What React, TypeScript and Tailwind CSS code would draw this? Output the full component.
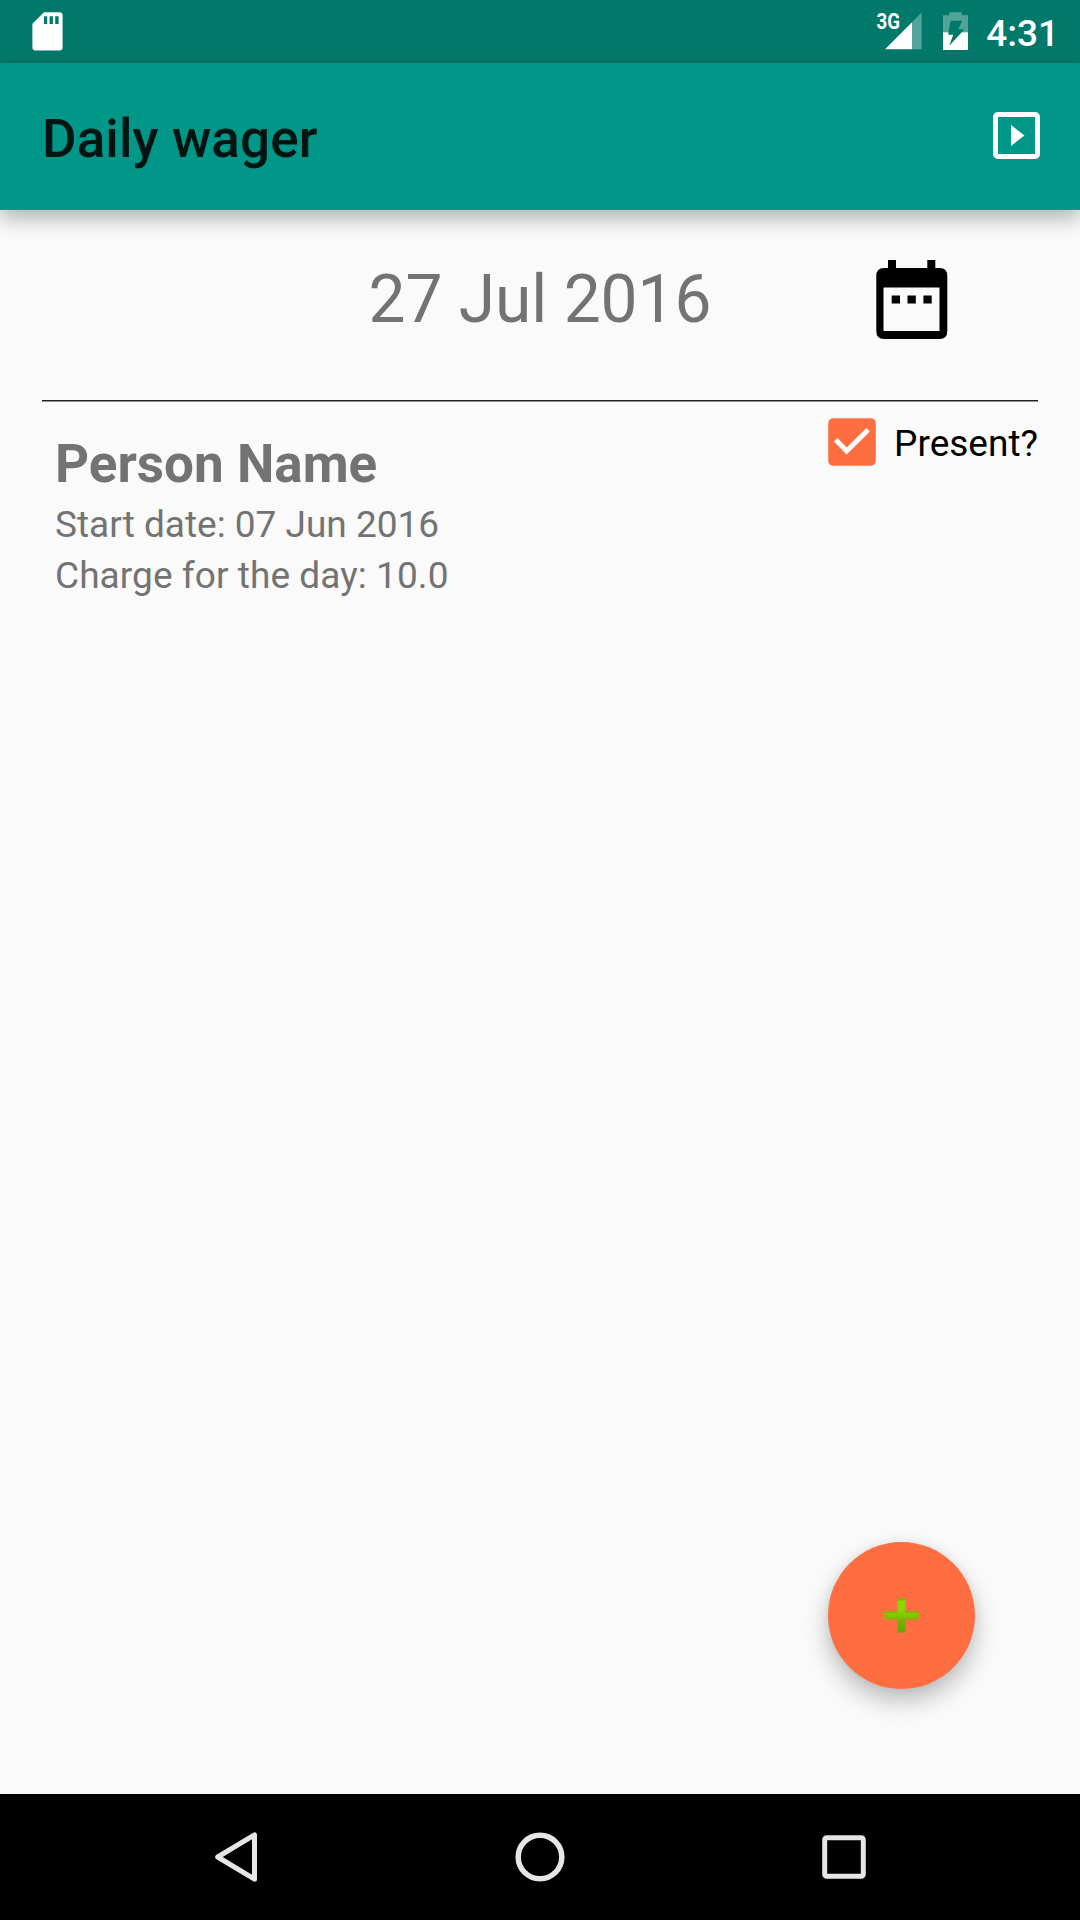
import React, { useState } from "react";

const people = [
  { name: "Person Name", startDate: "07 Jun 2016", charge: "10.0" },
];

const StatusBar = () => (
  <div className="flex h-[63px] items-center justify-between bg-[#00796B] pl-8 pr-[21px] text-white">
    <svg width="31" height="39" viewBox="0 0 31 39" fill="currentColor">
      <path
        fillRule="evenodd"
        d="M12 0.3H27.5Q30.6 0.3 30.6 3.5V35.3Q30.6 38.5 27.5 38.5H3.6Q0.4 38.5 0.4 35.3V11.7ZM12 4.3V12H15.2V4.3ZM17.6 4.3V12H20.9V4.3ZM23.2 4.3V12H26.6V4.3Z"
      />
    </svg>

    <div className="flex h-[63px] items-start">
      <svg className="mt-1" width="46" height="46" viewBox="0 -8 46 46" fill="currentColor">
        <text
          x="0.5"
          y="17"
          fontSize="22"
          fontWeight="700"
          textLength="23.5"
          lengthAdjust="spacingAndGlyphs"
        >
          3G
        </text>
        <path d="M9 37.3L36 10.3V37.3Z" />
        <path d="M36 10.3L45.6 0.6V37.3H36Z" opacity="0.32" />
      </svg>
      <svg className="ml-[21px] mt-3" width="25" height="38" viewBox="0 0 25 38" fill="currentColor">
        <path
          fillRule="evenodd"
          opacity="0.32"
          d="M6.3 0.3H18.7V3.2H25V20.3H18.8L21.3 17.2H15.3L19.3 8.8H7.5L5.5 20.3H0V3.2H6.3Z"
        />
        <path
          fillRule="evenodd"
          d="M0 20.3H5.5L5.2 22.8H10.2L6.3 33.8L18.8 20.3H25V38H0Z"
        />
      </svg>
      <span className="ml-[18px] mt-[15px] text-[37px] leading-none font-medium">4:31</span>
    </div>
  </div>
);

const Toolbar = () => (
  <header className="relative z-10 flex h-[147px] items-center justify-between bg-[#009688] pl-[42px] pr-10 shadow-[0_8px_20px_rgba(0,0,0,0.3)]">
    <h1 className="pt-[5px] text-[53px] leading-none font-medium tracking-[0.1px] text-[#001412]">
      Daily wager
    </h1>
    <button type="button" aria-label="Report">
      <svg className="mb-0.5" width="47" height="47" viewBox="0 0 47 47">
        <rect x="2.5" y="2.5" width="42" height="42" rx="2.5" fill="none" stroke="white" strokeWidth="5" />
        <path d="M18 13V34L31.5 23.5Z" fill="white" />
      </svg>
    </button>
  </header>
);

const CalendarIcon = () => (
  <svg width="72" height="79" viewBox="0 0 72 79">
    <path
      fillRule="evenodd"
      d="M12 0H20V8H51.3V0H59.3V8H63.6Q71.3 8 71.3 16V71Q71.3 79 63.6 79H8Q0.3 79 0.3 71V16Q0.3 8 8 8H12ZM7.5 27.4V71H63.5V27.4ZM15.7 35.4H24V43.6H15.7ZM31.5 35.4H39.8V43.6H31.5ZM47.4 35.4H55.7V43.6H47.4Z"
    />
  </svg>
);

const PersonRow = ({ person }: { person: (typeof people)[0] }) => {
  const [present, setPresent] = useState(true);

  return (
    <div className="flex items-start justify-between pl-[13px]">
      <div className="pt-[30px] text-[37px] leading-[51px] text-[#737373]">
        <h2 className="mb-[3px] text-[53px] leading-[64px] font-bold">{person.name}</h2>
        <p>Start date: {person.startDate}</p>
        <p className="tracking-[0.07px]">Charge for the day: {person.charge}</p>
      </div>

      <button
        type="button"
        onClick={() => setPresent(!present)}
        className="flex items-center pt-4"
      >
        <svg width="48" height="48" viewBox="0 0 48 48">
          <rect x="0.2" y="0.2" width="47.6" height="47.6" rx="5" fill="#FF6E40" />
          {present && (
            <path d="M7.7 21.8L18.7 33L40.2 11.7" fill="none" stroke="white" strokeWidth="5" />
          )}
        </svg>
        <span className="ml-[18px] pt-[3px] text-[37px] leading-none text-black">Present?</span>
      </button>
    </div>
  );
};

const NavBar = () => (
  <nav className="flex h-[126px] items-center bg-black pl-[215px]">
    <svg width="42" height="50" viewBox="0 0 42 50" fill="none" stroke="#E6E6E6" strokeWidth="5" strokeLinejoin="round">
      <path d="M39.5 2.8V47.2L2.7 25Z" />
    </svg>
    <svg className="ml-[258px]" width="50" height="50" viewBox="0 0 50 50" fill="none" stroke="#E6E6E6" strokeWidth="5.5">
      <circle cx="25" cy="25" r="21.8" />
    </svg>
    <svg className="ml-[257px]" width="44" height="44" viewBox="0 0 44 44" fill="none" stroke="#E6E6E6" strokeWidth="5">
      <rect x="2.7" y="2.7" width="38.6" height="38.6" rx="2" />
    </svg>
  </nav>
);

const App = () => {
  return (
    <div className="relative flex h-[1920px] w-[1080px] flex-col overflow-hidden bg-[#FAFAFA] font-[Roboto,sans-serif]">
      <StatusBar />
      <Toolbar />

      <main className="flex-1 px-[42px] pt-[50px]">
        <div className="grid h-[140px] grid-cols-[1fr_auto_1fr] items-start">
          <p className="col-start-2 pt-px text-[65.8px] leading-[78px] whitespace-nowrap text-[#737373]">
            27 Jul 2016
          </p>
          <button type="button" aria-label="Pick date" className="justify-self-end pr-[90px]">
            <CalendarIcon />
          </button>
        </div>
        <div className="h-0.5 border-t border-[#222222] bg-[#8F8F8F]" />

        {people.map((person) => (
          <PersonRow key={person.name} person={person} />
        ))}
      </main>

      <button
        type="button"
        aria-label="Add person"
        className="absolute right-[105px] bottom-[231px] flex size-[147px] items-center justify-center rounded-full bg-[#FF6E40] shadow-[0_12px_24px_rgba(0,0,0,0.25),0_0_10px_rgba(0,0,0,0.06)]"
      >
        <svg className="mb-px" width="35" height="35" viewBox="0 0 35 35">
          <defs>
            <linearGradient id="plus" x1="0" y1="0" x2="0" y2="1">
              <stop offset="0" stopColor="#6FAE00" />
              <stop offset="0.1" stopColor="#8FD800" />
              <stop offset="0.4" stopColor="#89D000" />
              <stop offset="0.65" stopColor="#76B500" />
              <stop offset="1" stopColor="#66A000" />
            </linearGradient>
          </defs>
          <path d="M13.5 0.5H21.5V13.5H34.5V21.5H21.5V34.5H13.5V21.5H0.5V13.5H13.5Z" fill="url(#plus)" />
          <path d="M0.5 14H13.5M21.5 14H34.5" stroke="#6FA800" />
        </svg>
      </button>

      <NavBar />
    </div>
  );
};

export default App;
